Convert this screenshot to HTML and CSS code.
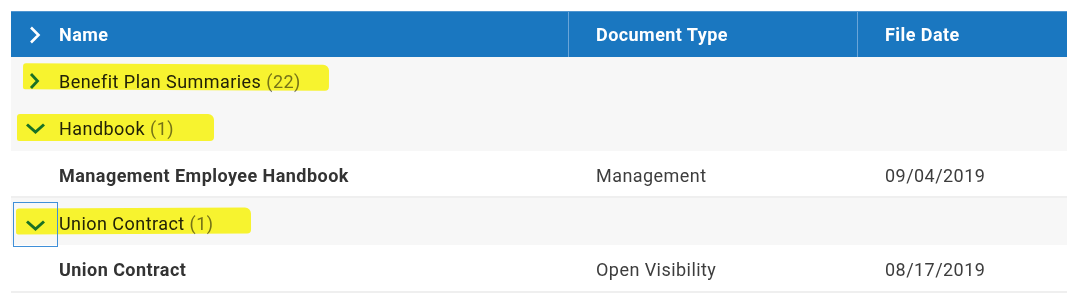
FILE: index.html
```html
<!DOCTYPE html>
<html>
<head>
<meta charset="utf-8">
<link rel="stylesheet" href="styles.css">
</head>
<body>
<div class="page">
  <div class="grid">
    <div class="row head">
      <div class="cell name">
        <span class="toggle"><svg width="24" height="24" viewBox="0 0 24 24"><path d="M7 4.5 L14.5 12 L7 19.5" fill="none" stroke="#fff" stroke-width="2.6"/></svg></span>
        <span>Name</span>
      </div>
      <div class="cell">Document Type</div>
      <div class="cell">File Date</div>
    </div>

    <div class="row group">
      <div class="cell name">
        <span class="toggle"><svg width="24" height="24" viewBox="0 0 24 24"><path d="M7 5 L13.5 12 L7 19" fill="none" stroke="#1a73c0" stroke-width="2.8"/></svg></span>
        <span class="label">Benefit Plan Summaries <span class="count">(22)</span></span>
        <span class="mark mark-a"></span>
      </div>
    </div>

    <div class="row group">
      <div class="cell name">
        <span class="toggle"><svg width="24" height="24" viewBox="0 0 24 24"><path d="M3 8.5 L11.5 16 L20 8.5" fill="none" stroke="#1a73c0" stroke-width="3"/></svg></span>
        <span class="label">Handbook <span class="count">(1)</span></span>
        <span class="mark mark-b"></span>
      </div>
    </div>

    <div class="row item">
      <div class="cell name"><span class="toggle"></span><b>Management Employee Handbook</b></div>
      <div class="cell">Management</div>
      <div class="cell">09/04/2019</div>
    </div>

    <div class="row group">
      <div class="cell name">
        <span class="toggle focused"><svg width="24" height="24" viewBox="0 0 24 24"><path d="M3 8.5 L11.5 16 L20 8.5" fill="none" stroke="#1a73c0" stroke-width="3"/></svg></span>
        <span class="label">Union Contract <span class="count">(1)</span></span>
        <span class="mark mark-c"></span>
      </div>
    </div>

    <div class="row item">
      <div class="cell name"><span class="toggle"></span><b>Union Contract</b></div>
      <div class="cell">Open Visibility</div>
      <div class="cell">08/17/2019</div>
    </div>
  </div>
</div>
</body>
</html>
```

FILE: styles.css
```css
html, body {
  margin: 0;
  padding: 0;
  background: #fff;
}
.page {
  padding: 11px 7px 0 11px;
  font-family: Roboto, "Liberation Sans", sans-serif;
  font-size: 18px;
  letter-spacing: 0.45px;
  color: #333;
}
.grid {
  width: 1056px;
}
.row {
  display: grid;
  grid-template-columns: 557px 289px 1fr;
  height: 47px;
  box-sizing: border-box;
}
.cell {
  display: flex;
  align-items: center;
  padding-left: 28px;
  position: relative;
  white-space: nowrap;
}
.cell.name {
  padding-left: 2px;
}
.toggle {
  width: 45px;
  height: 45px;
  flex: none;
  display: flex;
  align-items: center;
  justify-content: center;
  margin-right: 1px;
  box-sizing: border-box;
}
.toggle svg {
  display: block;
}
.head {
  height: 46px;
  background: #1a77c0;
  color: #fff;
  font-weight: 700;
  border-top: 1px solid #4f95d0;
}
.head .cell + .cell {
  border-left: 1px solid #6aa5d8;
  padding-left: 27px;
}
.group {
  background: #f7f7f7;
}
.group .cell.name {
  grid-column: 1 / -1;
}
.label {
  color: #222;
  padding-top: 2px;
}
.count {
  color: #757575;
}
.item {
  background: #fff;
  border-bottom: 2px solid #efefef;
  color: #3d3d3d;
  padding-top: 2px;
}
.item:last-child {
  height: 48px;
}
.item b {
  color: #333;
  font-weight: 700;
}
.focused {
  position: relative;
  margin-top: 4px;
  height: 45px;
}
.focused::after {
  content: "";
  position: absolute;
  inset: 0;
  border: 1px solid #3f8fd8;
  z-index: 2;
}
.mark {
  position: absolute;
  background: #fffb30;
  mix-blend-mode: multiply;
  border-radius: 3px 6px 4px 2px;
  pointer-events: none;
}
.mark-a {
  left: 12px;
  top: 7px;
  width: 306px;
  height: 26px;
  transform: rotate(0.3deg);
}
.mark-b {
  left: 6px;
  top: 10px;
  width: 197px;
  height: 27px;
}
.mark-c {
  left: 5px;
  top: 10px;
  width: 235px;
  height: 26px;
  transform: rotate(-0.3deg);
}
```
